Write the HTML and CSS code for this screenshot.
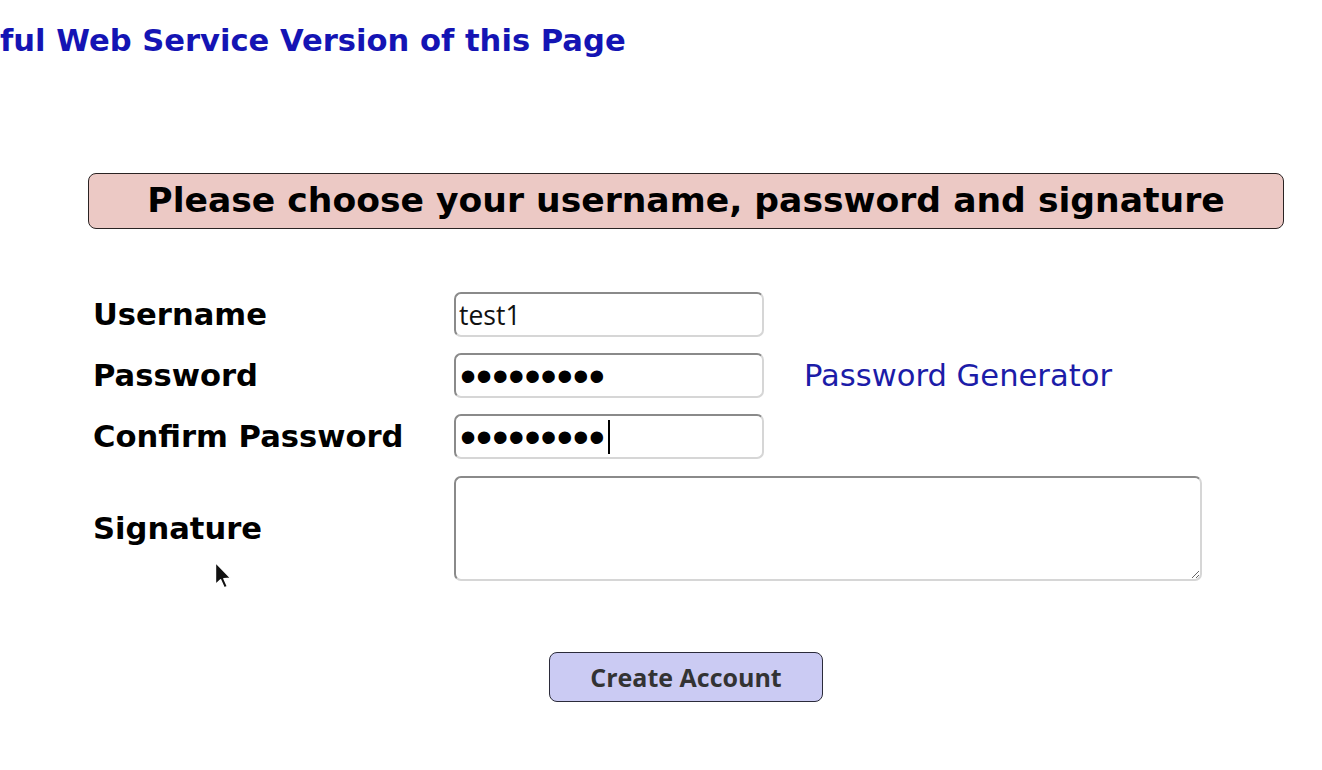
FILE: index.html
```html
<!DOCTYPE html>
<html>
<head>
<meta charset="utf-8">
<link rel="stylesheet" href="styles.css">
</head>
<body>
<div class="page">
  <a class="rest-link" href="#">ful Web Service Version of this Page</a>
  <form class="signup">
    <h2 class="banner">Please choose your username, password and signature</h2>
    <div class="fields">
      <label class="lbl" for="u">Username</label>
      <input class="inp" id="u" type="text" value="test1">
      <span></span>

      <label class="lbl" for="p">Password</label>
      <input class="inp pw" id="p" type="password" value="abcdefghi">
      <a class="gen" href="#">Password Generator</a>

      <label class="lbl" for="c">Confirm Password</label>
      <div class="caret-wrap">
        <input class="inp pw" id="c" type="password" value="abcdefghi">
        <span class="caret"></span>
      </div>
      <span></span>

      <label class="lbl sig" for="s">Signature</label>
      <textarea class="area" id="s"></textarea>
      <span></span>
    </div>
    <div class="actions">
      <button class="btn" type="button">Create Account</button>
    </div>
  </form>
  <svg class="cursor" width="20" height="30" viewBox="0 0 20 30">
    <path d="M1.5 1.5 L1.5 23.5 L6.6 18.8 L10.2 26.8 L13.4 25.4 L9.9 17.6 L16.8 17.3 Z" fill="#111" stroke="#fff" stroke-width="1.4" stroke-linejoin="round"/>
  </svg>
</div>
</body>
</html>
```
FILE: styles.css
```css
html, body {
  margin: 0;
  padding: 0;
  background: #ffffff;
}
.page {
  position: relative;
  width: 1322px;
  height: 770px;
  overflow: hidden;
  font-family: "DejaVu Sans", sans-serif;
}
.rest-link {
  display: block;
  margin: 22px 0 0 0;
  font-size: 30.6px;
  font-weight: bold;
  color: #1414b4;
  text-decoration: none;
  line-height: 38px;
  white-space: nowrap;
}
.signup {
  margin: 113px 0 0 88px;
  width: 1196px;
}
.banner {
  margin: 0;
  height: 56px;
  box-sizing: border-box;
  border: 1.5px solid #2a2323;
  border-radius: 8px;
  background: #ecc9c5;
  color: #000;
  font-size: 34.6px;
  font-weight: bold;
  line-height: 53px;
  text-align: center;
}
.fields {
  display: grid;
  grid-template-columns: 361px 310px auto;
  row-gap: 16px;
  align-items: center;
  margin-top: 63px;
  margin-left: 5px;
}
.lbl {
  font-size: 30.6px;
  font-weight: bold;
  color: #000;
}
.inp {
  box-sizing: border-box;
  width: 310px;
  height: 45px;
  margin: 0;
  padding: 0 3px;
  border: 2px solid;
  border-color: #8a8a8a #d6d6d6 #d6d6d6 #8a8a8a;
  border-radius: 7px;
  background: #fff;
  font-family: "Open Sans", sans-serif;
  font-size: 26.5px;
  color: #111;
  outline: none;
}
.pw {
  font-family: "Liberation Sans", sans-serif;
  font-size: 46px;
  line-height: 41px;
  padding: 0 4px;
  color: #000;
}
.caret-wrap {
  position: relative;
  width: 310px;
  height: 45px;
}
.caret {
  position: absolute;
  left: 154px;
  top: 6px;
  width: 2px;
  height: 34px;
  background: #000;
}
.gen {
  margin-left: 40px;
  font-size: 30.6px;
  color: #1c1ca8;
  text-decoration: none;
  white-space: nowrap;
}
.area {
  box-sizing: border-box;
  width: 748px;
  height: 105px;
  margin: 1px 0 0 0;
  border: 2px solid;
  border-color: #8a8a8a #d6d6d6 #d6d6d6 #8a8a8a;
  border-radius: 7px;
  background: #fff;
  resize: both;
  outline: none;
}
.sig {
  align-self: center;
}
.actions {
  display: flex;
  justify-content: center;
  margin-top: 71px;
}
.btn {
  width: 274px;
  height: 50px;
  border: 1.5px solid #2b2b3a;
  border-radius: 8px;
  background: #cbcbf3;
  font-family: "Open Sans", sans-serif;
  font-weight: 700;
  font-size: 25px;
  color: #333;
  padding: 0;
}
.cursor {
  position: absolute;
  left: 214px;
  top: 561px;
}
```
